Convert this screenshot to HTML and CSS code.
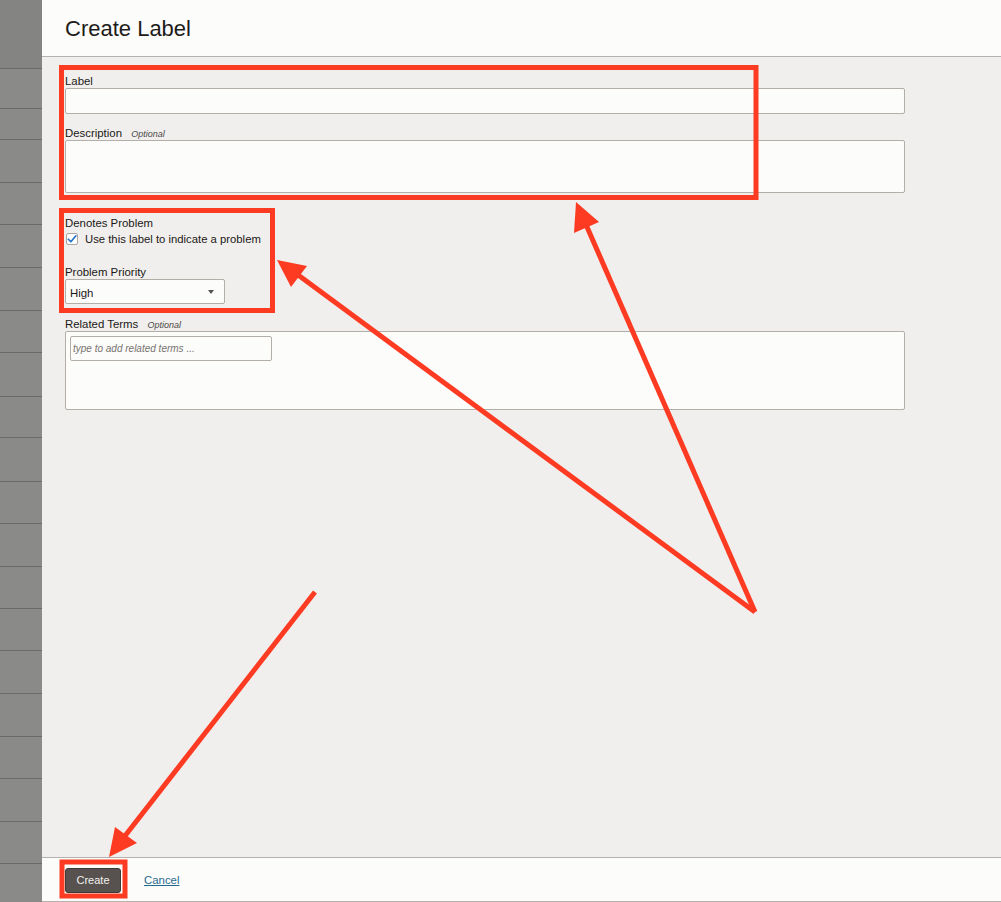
FILE: index.html
```html
<!DOCTYPE html>
<html lang="en">
<head>
<meta charset="utf-8">
<title>Create Label</title>
<link rel="stylesheet" href="styles.css">
</head>
<body>
<div class="page">
  <aside class="backdrop">
    <div class="row r69"></div>
    <div class="row r40"></div>
    <div class="row r31"></div>
    <div class="row r43"></div>
    <div class="row r42"></div>
    <div class="row r43"></div>
    <div class="row r43"></div>
    <div class="row r42"></div>
    <div class="row r44"></div>
    <div class="row r41"></div>
    <div class="row r44"></div>
    <div class="row r42"></div>
    <div class="row r43"></div>
    <div class="row r42"></div>
    <div class="row r42"></div>
    <div class="row r43"></div>
    <div class="row r43"></div>
    <div class="row r42"></div>
    <div class="row r43"></div>
    <div class="row r42"></div>
  </aside>
  <section class="panel">
    <header class="panel-header">
      <h1 class="title">Create Label</h1>
    </header>
    <main class="panel-body">
      <form class="form">
        <div class="field">
          <label class="field-label">Label</label>
          <div class="input"></div>
        </div>
        <div class="field field-desc">
          <label class="field-label">Description <span class="optional">Optional</span></label>
          <div class="input textarea"></div>
        </div>
        <div class="field field-problem">
          <label class="field-label">Denotes Problem</label>
          <div class="check-row">
            <span class="checkbox">
              <svg width="10" height="10" viewBox="0 0 10 10"><path d="M1.3 5.2 L3.9 7.8 L8.9 1.8" fill="none" stroke="#1f72cc" stroke-width="1.6" stroke-linecap="round" stroke-linejoin="round"/></svg>
            </span>
            <span class="check-text">Use this label to indicate a problem</span>
          </div>
        </div>
        <div class="field field-priority">
          <label class="field-label">Problem Priority</label>
          <div class="select">
            <span class="select-value">High</span>
            <span class="caret"></span>
          </div>
        </div>
        <div class="field field-terms">
          <label class="field-label">Related Terms <span class="optional">Optional</span></label>
          <div class="terms-box">
            <div class="terms-input">type to add related terms ...</div>
          </div>
        </div>
      </form>
    </main>
    <footer class="panel-footer">
      <button class="btn-create" type="button">Create</button>
      <a class="cancel" href="#">Cancel</a>
    </footer>
  </section>
</div>
<svg class="annotations" width="1001" height="902" viewBox="0 0 1001 902">
  <g fill="none" stroke="#fd3a22" stroke-width="5">
    <rect x="61.5" y="67.5" width="694.5" height="130"/>
    <rect x="61.5" y="210.5" width="211" height="100"/>
    <rect x="62" y="862" width="63" height="34"/>
    <line x1="755" y1="612" x2="584" y2="220"/>
    <line x1="755" y1="612" x2="290" y2="269"/>
    <line x1="315" y1="592" x2="121" y2="841"/>
  </g>
  <g fill="#fd3a22">
    <polygon points="576,202 599,222 574,233"/>
    <polygon points="277,260 307,266 291,287"/>
    <polygon points="109,857 115,827 137,843"/>
  </g>
</svg>
</body>
</html>
```
FILE: styles.css
```css
* { box-sizing: border-box; }
html, body { margin: 0; padding: 0; }
body {
  width: 1001px;
  height: 902px;
  overflow: hidden;
  font-family: "Liberation Sans", Arial, Helvetica, sans-serif;
  color: #1a1816;
  background: #f1efed;
  position: relative;
}
.page {
  display: flex;
  height: 902px;
}
.backdrop {
  width: 42px;
  flex: none;
  background: #8a8a88;
  display: flex;
  flex-direction: column;
}
.row { border-bottom: 1px solid #6b6a68; flex: none; }
.r69 { height: 69px; background: #848482; }
.r40 { height: 40px; }
.r31 { height: 31px; }
.r41 { height: 41px; }
.r42 { height: 42px; }
.r43 { height: 43px; }
.r44 { height: 44px; }

.panel {
  flex: 1;
  display: flex;
  flex-direction: column;
  background: #f1efed;
}
.panel-header {
  height: 57px;
  background: #fcfcfa;
  border-bottom: 1px solid #b5b1ac;
  padding: 16px 0 0 23px;
  flex: none;
}
.title {
  margin: 0;
  font-size: 22px;
  line-height: 25px;
  font-weight: 400;
  color: #1c1b1a;
}
.panel-body {
  flex: 1;
  padding: 17px 0 0 23px;
}
.form { width: 840px; display: flex; flex-direction: column; }
.field { display: flex; flex-direction: column; }
.field-label {
  display: block;
  height: 14px;
  font-size: 11.4px;
  line-height: 14px;
  color: #1a1816;
  overflow: visible;
}
.optional {
  font-size: 9px;
  line-height: 10px;
  font-style: italic;
  color: #4a4846;
  margin-left: 6px;
}
.input {
  height: 26px;
  background: #fcfcfa;
  border: 1px solid #b3aea8;
  border-radius: 2px;
}
.textarea { height: 53px; }
.field-desc { margin-top: 12px; }
.field-problem { margin-top: 23px; }
.check-row {
  margin-top: 2px;
  display: flex;
  align-items: center;
  height: 14px;
}
.checkbox {
  width: 12px;
  height: 12px;
  margin-left: 1px;
  background: #fff;
  border: 1px solid #a9a6a2;
  border-radius: 2px;
  display: flex;
  align-items: center;
  justify-content: center;
}
.check-text {
  margin-left: 7px;
  font-size: 11.3px;
  line-height: 14px;
}
.field-priority { margin-top: 19px; }
.select {
  width: 160px;
  height: 25px;
  background: #fcfcfa;
  border: 1px solid #b3aea8;
  border-radius: 2px;
  display: flex;
  align-items: center;
  justify-content: space-between;
  padding: 0 10px 0 4px;
}
.select-value { font-size: 11.4px; line-height: 14px; margin-top: 2px; }
.caret {
  width: 0;
  height: 0;
  border-left: 3.5px solid transparent;
  border-right: 3.5px solid transparent;
  border-top: 4px solid #555350;
  margin-top: 1px;
}
.field-terms { margin-top: 13px; }
.terms-box {
  height: 79px;
  background: #fcfcfa;
  border: 1px solid #b3aea8;
  border-radius: 2px;
  padding: 4px;
}
.terms-input {
  width: 202px;
  height: 25px;
  border: 1px solid #b3aea8;
  border-radius: 2px;
  background: #fcfcfa;
  font-size: 10px;
  font-style: italic;
  color: #77736f;
  line-height: 23px;
  padding-left: 2px;
}
.panel-footer {
  flex: none;
  height: 45px;
  background: #fcfcfa;
  border-top: 1px solid #b5b1ac;
  border-bottom: 1px solid #b5b1ac;
  display: flex;
  align-items: center;
  padding: 0 0 0 23px;
}
.btn-create {
  width: 56px;
  height: 25px;
  background: #57524f;
  color: #f4f2f0;
  border: 1px solid #3e3a37;
  border-radius: 3px;
  font-family: "Liberation Sans", Arial, sans-serif;
  font-size: 11px;
  padding: 0;
  margin-top: 1px;
}
.cancel {
  margin-left: 23px;
  font-size: 11.4px;
  color: #1f6a8e;
  text-decoration: underline;
}
.annotations {
  position: absolute;
  left: 0;
  top: 0;
  pointer-events: none;
}
```
